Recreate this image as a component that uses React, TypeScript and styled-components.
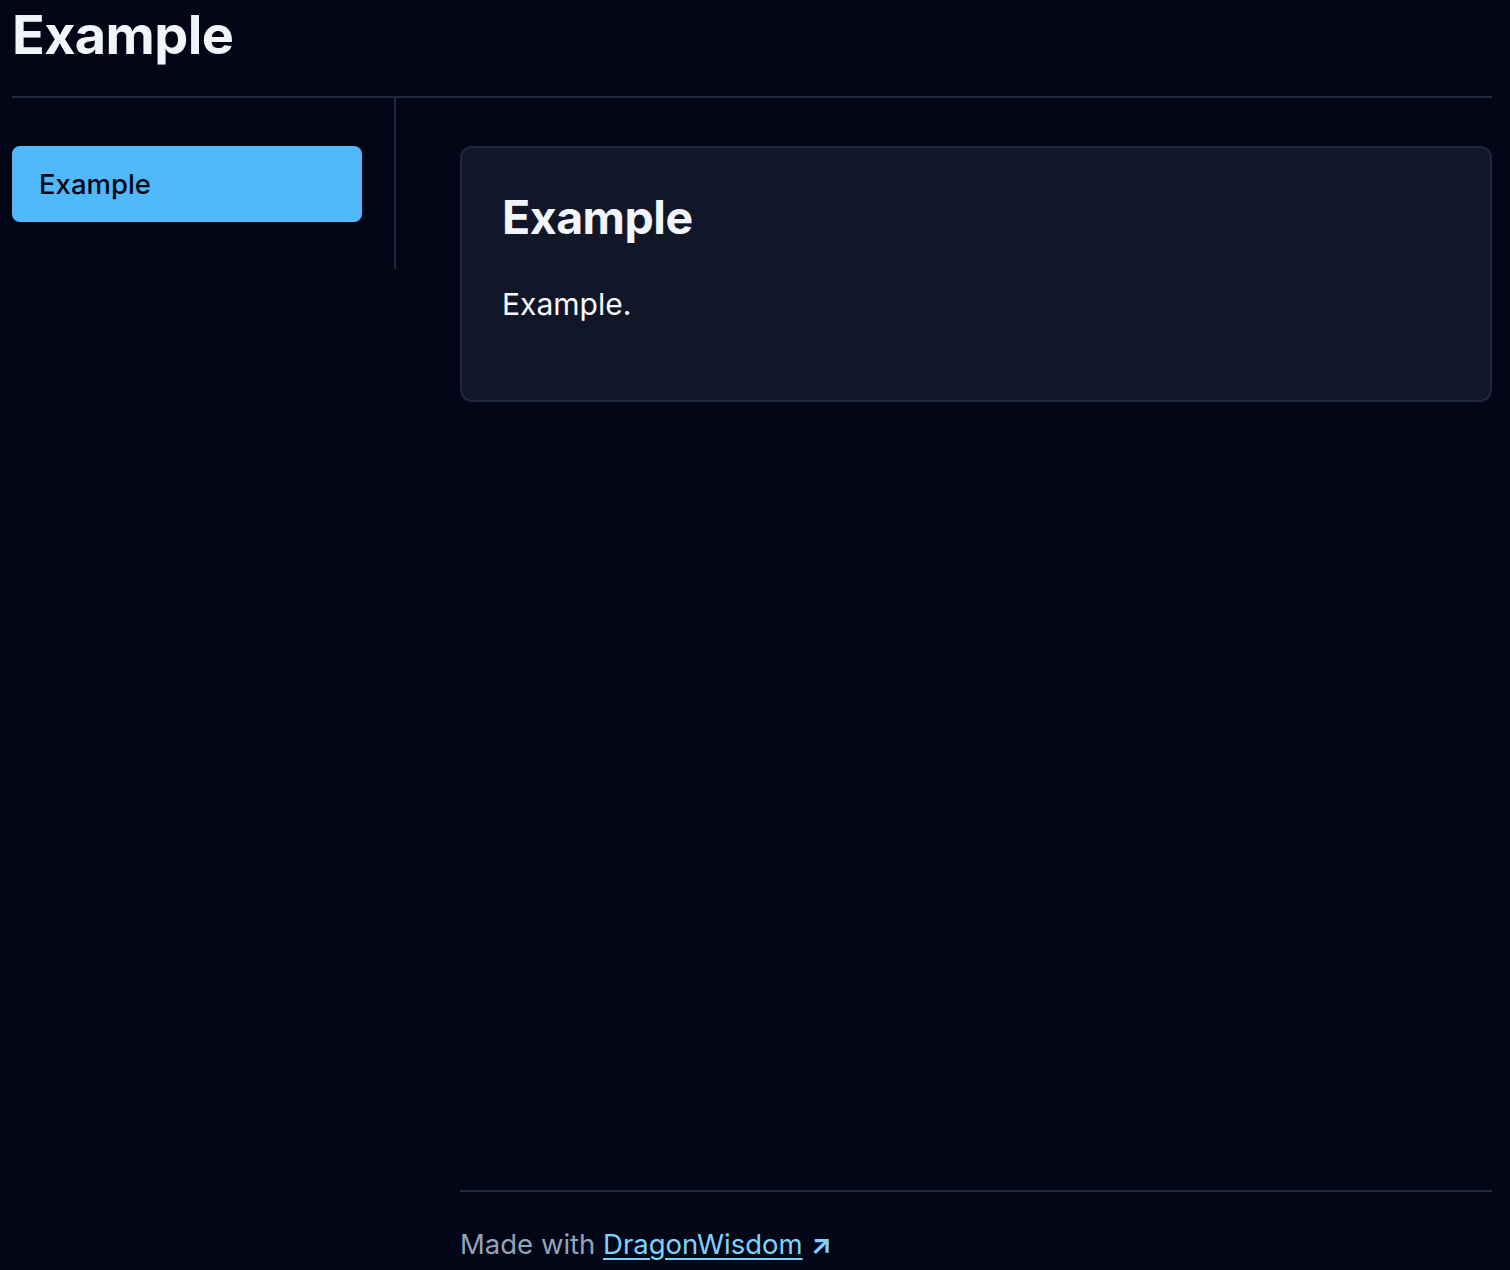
import styled, { createGlobalStyle } from "styled-components";

const GlobalStyle = createGlobalStyle`
  html, body {
    margin: 0;
    padding: 0;
    background: #020617;
    color: #f1f5f9;
    font-family: Inter, "Noto Sans", sans-serif;
  }
  * { box-sizing: border-box; }
`;

const Page = styled.div`
  min-height: 100vh;
  display: flex;
  flex-direction: column;
  padding: 0 18px 0 12px;
`;

const Header = styled.header`
  padding: 3px 0 28px;
  border-bottom: 2px solid #1e293b;
`;

const SiteTitle = styled.h1`
  margin: 0;
  font-size: 54px;
  line-height: 1.2;
  font-weight: 700;
  letter-spacing: -0.6px;
  color: #f1f5f9;
`;

const Body = styled.div`
  flex: 1;
  display: flex;
  gap: 64px;
`;

const Sidebar = styled.nav`
  align-self: flex-start;
  width: 384px;
  padding: 48px 32px 47px 0;
  border-right: 2px solid #1e293b;
  display: flex;
  flex-direction: column;
  gap: 8px;
`;

const NavItem = styled.a<{ active?: boolean }>`
  display: flex;
  align-items: center;
  height: 76px;
  padding: 0 27px;
  border-radius: 8px;
  font-size: 27.5px;
  font-weight: 500;
  text-decoration: none;
  background: ${({ active }) => (active ? "#4fb9fa" : "transparent")};
  color: ${({ active }) => (active ? "#020617" : "#cbd5e1")};
`;

const Main = styled.main`
  flex: 1;
  display: flex;
  flex-direction: column;
  padding-top: 48px;
`;

const Card = styled.section`
  background: #111729;
  border: 2px solid #1e293b;
  border-radius: 12px;
  padding: 42px 40px 73px;
`;

const CardTitle = styled.h2`
  margin: 0 0 36px;
  font-size: 46.5px;
  line-height: 1.2;
  font-weight: 700;
  letter-spacing: -0.5px;
  color: #f1f5f9;
`;

const CardText = styled.p`
  margin: 0;
  font-size: 30px;
  line-height: 1.5;
  color: #f8fafc;
`;

const Footer = styled.footer`
  margin-top: auto;
  border-top: 2px solid #1e293b;
  padding: 32px 0 5px;
  font-size: 27.5px;
  line-height: 1.5;
  color: #94a3b8;
`;

const FooterLink = styled.a`
  color: #7dd3fc;
  text-decoration: underline;
  text-underline-offset: 4px;
  text-decoration-thickness: 2px;
`;

const Arrow = styled.span`
  color: #7dd3fc;
  margin-left: 8px;
  font-weight: 700;
`;

export default function App() {
  return (
    <>
      <GlobalStyle />
      <Page>
        <Header>
          <SiteTitle>Example</SiteTitle>
        </Header>
        <Body>
          <Sidebar>
            <NavItem href="#" active>
              Example
            </NavItem>
          </Sidebar>
          <Main>
            <Card>
              <CardTitle>Example</CardTitle>
              <CardText>Example.</CardText>
            </Card>
            <Footer>
              Made with <FooterLink href="#">DragonWisdom</FooterLink>
              <Arrow>↗</Arrow>
            </Footer>
          </Main>
        </Body>
      </Page>
    </>
  );
}
